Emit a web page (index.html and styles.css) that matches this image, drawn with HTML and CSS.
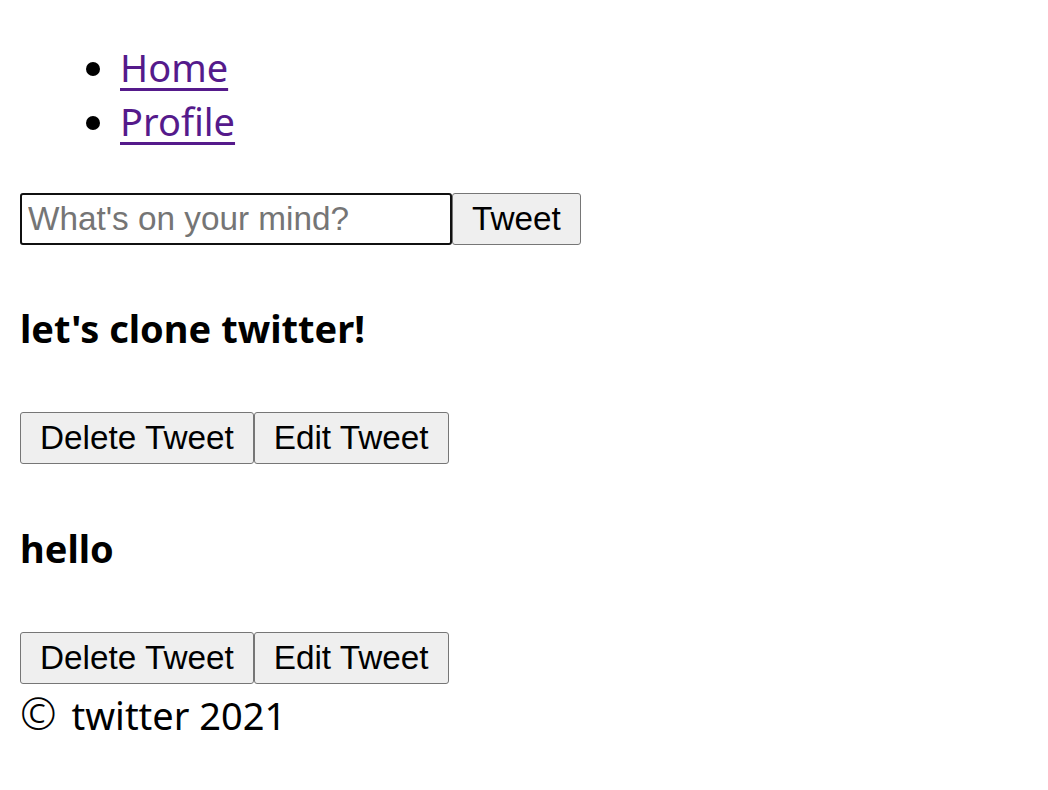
FILE: index.html
```html
<!DOCTYPE html>
<html lang="en">
<head>
<meta charset="utf-8">
<title>Twitter</title>
<link rel="stylesheet" href="styles.css">
</head>
<body>
<nav class="nav">
  <ul class="nav-list">
    <li><a class="nav-link" href="#">Home</a></li>
    <li><a class="nav-link" href="#">Profile</a></li>
  </ul>
</nav>
<form class="tweet-form">
  <input class="tweet-input" type="text" placeholder="What's on your mind?" maxlength="120"><button class="btn" type="button">Tweet</button>
</form>
<div class="tweet">
  <h4 class="tweet-text">let's clone twitter!</h4>
  <div class="tweet-actions"><button class="btn" type="button">Delete Tweet</button><button class="btn" type="button">Edit Tweet</button></div>
</div>
<div class="tweet">
  <h4 class="tweet-text">hello</h4>
  <div class="tweet-actions"><button class="btn" type="button">Delete Tweet</button><button class="btn" type="button">Edit Tweet</button></div>
</div>
<footer class="footer"><span class="copy">&copy;</span> twitter 2021</footer>
</body>
</html>
```
FILE: styles.css
```css
html, body {
  background: #ffffff;
}
body {
  margin: 0;
  padding: 40px 20px 20px;
  font-family: "Noto Sans", "Noto Sans CJK KR", sans-serif;
  font-size: 38px;
  line-height: 54px;
  color: #000000;
}
.nav {
  display: block;
}
.nav-list {
  margin: 0 0 40px;
  padding-left: 100px;
  list-style: disc;
}
.nav-link {
  color: #551a8b;
  text-decoration: underline;
  text-decoration-thickness: 3px;
  text-underline-offset: 6px;
}
.tweet-form {
  display: flex;
  margin: 0;
  padding: 5px 0 3px;
}
.tweet-input {
  box-sizing: border-box;
  width: 432px;
  height: 52px;
  margin: 0;
  padding: 0 6px;
  border: 2px solid #101010;
  border-radius: 3px;
  font-family: "Liberation Sans", Arial, sans-serif;
  font-size: 33.3px;
  color: #000000;
  outline: none;
  caret-color: #000000;
}
.tweet-input::placeholder {
  color: #757575;
}
.btn {
  box-sizing: border-box;
  height: 52px;
  margin: 0;
  padding: 0 19px;
  background: #efefef;
  border: 1px solid #767676;
  border-radius: 3px;
  font-family: "Liberation Sans", Arial, sans-serif;
  font-size: 33.3px;
  color: #000000;
}
.tweet-text {
  margin: 53px 0;
  font-size: 38px;
  line-height: 54px;
  font-weight: bold;
}
.tweet-actions {
  display: flex;
  padding: 4px 0;
}
.footer {
  font-size: 38px;
  line-height: 54px;
}
.copy {
  display: inline-block;
  margin-right: 5px;
  font-size: 44px;
  line-height: 40px;
  font-weight: 300;
}
```
